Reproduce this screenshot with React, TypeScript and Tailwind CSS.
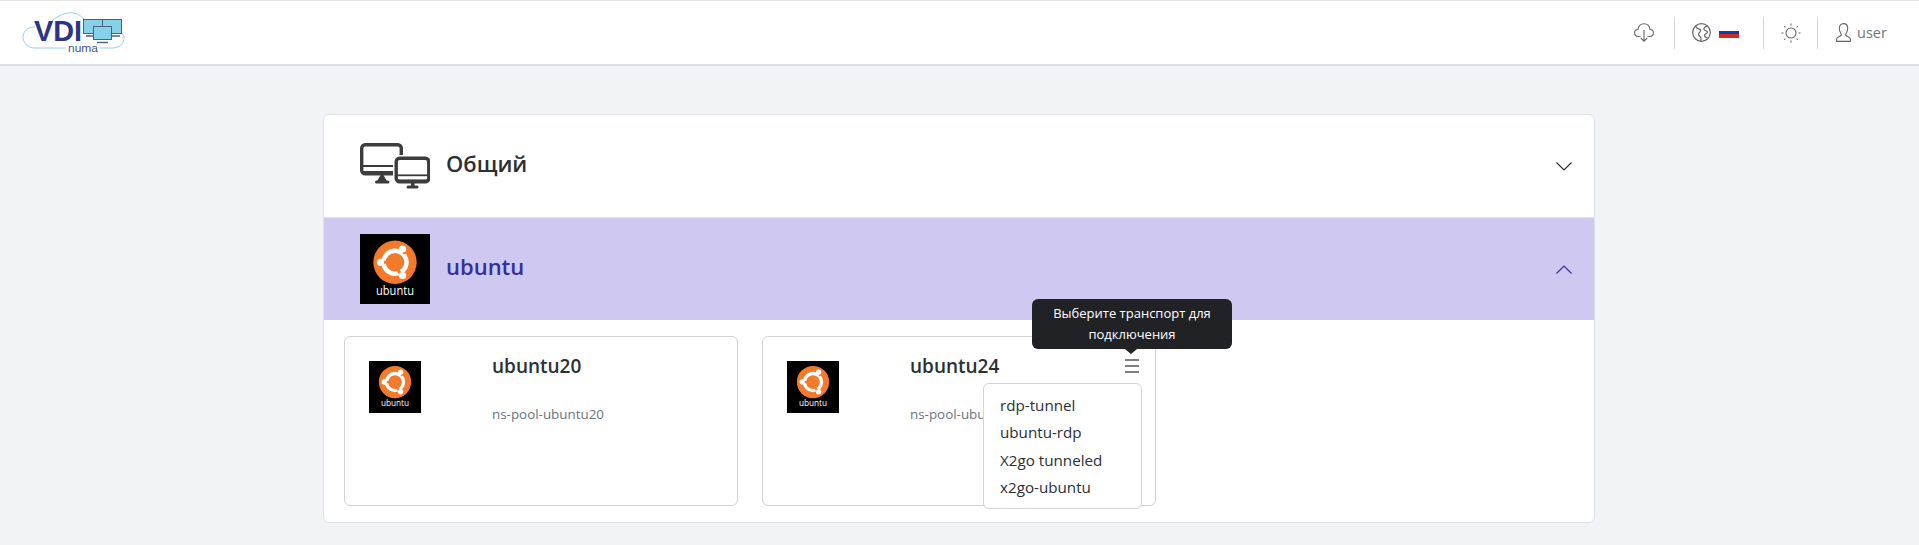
import React from "react";

function Logo() {
  return (
    <svg width="110" height="46" viewBox="20 10 110 46" className="block">
      <path d="M66 48 H35 C27 48 23 42 23 37 C23 31 28 27 35 27" fill="none" stroke="#8fd3ee" strokeWidth="1" />
      <path d="M52 21 C58 15 67 12 74 13 C78 14 81 16 84 19" fill="none" stroke="#8fd3ee" strokeWidth="1" />
      <path d="M100 48 H112 C120 48 124 43 124 38 C124 36 123 34 122 33" fill="none" stroke="#8fd3ee" strokeWidth="1" />
      <text x="34" y="41" fontFamily="'Liberation Sans', sans-serif" fontSize="29" fontWeight="700" fill="#2b3585" textLength="48" lengthAdjust="spacingAndGlyphs">VDI</text>
      <text x="68" y="52" fontFamily="'Liberation Sans', sans-serif" fontSize="10" fill="#4a5488" textLength="30" lengthAdjust="spacingAndGlyphs">numa</text>
      <rect x="83.5" y="19.5" width="19" height="14" fill="#86d0ea" stroke="#4f5f80" strokeWidth="1" />
      <rect x="102.5" y="19.5" width="19" height="14" fill="#86d0ea" stroke="#4f5f80" strokeWidth="1" />
      <path d="M86 36 H97 M109 36 H120" stroke="#4f5f80" strokeWidth="1.4" />
      <rect x="93" y="26" width="19" height="15" fill="#fff" />
      <rect x="93.5" y="26.5" width="18" height="13" fill="#86d0ea" stroke="#4f5f80" strokeWidth="1" />
      <path d="M97 42.5 H108" stroke="#4f5f80" strokeWidth="1.4" />
    </svg>
  );
}

function UbuntuLogo({ size }: { size: number }) {
  return (
    <svg width={size} height={size} viewBox="0 0 70 70" className="block shrink-0">
      <rect width="70" height="70" fill="#000" />
      <circle cx="35" cy="28.3" r="21.7" fill="#f47a2b" />
      <circle cx="35" cy="28.3" r="11.5" fill="none" stroke="#fff" strokeWidth="4.5" />
      <path d="M41 13 L45 20 M21 28.3 L30 28.3 M43 44 L38 36" stroke="#f47a2b" strokeWidth="3" />
      <circle cx="42.6" cy="15" r="3.6" fill="#fff" />
      <circle cx="20.5" cy="28.3" r="3.6" fill="#fff" />
      <circle cx="42.6" cy="41.5" r="3.6" fill="#fff" />
      <text x="35" y="60.5" textAnchor="middle" fontFamily="'Open Sans', sans-serif" fontSize="12.5" fill="#fff" textLength="38" lengthAdjust="spacingAndGlyphs">ubuntu</text>
    </svg>
  );
}

function MonitorsIcon() {
  return (
    <svg width="70" height="46" viewBox="0 0 70 46" fill="none" className="block">
      <rect x="1.7" y="1.7" width="39.6" height="29" rx="3.5" stroke="#3c3c3c" strokeWidth="3.4" />
      <path d="M2 23 H41 M2 29 H41" stroke="#3c3c3c" strokeWidth="2" />
      <path d="M22 31 L18 38 H26 Z" fill="#3c3c3c" stroke="#3c3c3c" strokeWidth="1.5" />
      <rect x="15" y="37.5" width="14.5" height="3" rx="1.5" fill="#3c3c3c" />
      <rect x="33" y="12" width="37" height="30" fill="#fff" />
      <rect x="36.2" y="15.2" width="32.6" height="23.6" rx="3.5" fill="#fff" stroke="#3c3c3c" strokeWidth="3.4" />
      <path d="M37 32.3 H68" stroke="#3c3c3c" strokeWidth="1.8" />
      <path d="M37 37.5 H68" stroke="#3c3c3c" strokeWidth="2.2" />
      <rect x="51" y="39" width="3.5" height="4" fill="#3c3c3c" />
      <rect x="46.5" y="42.5" width="12" height="3" rx="1.5" fill="#3c3c3c" />
    </svg>
  );
}

function Chevron({ up, color }: { up?: boolean; color: string }) {
  return (
    <svg width="16" height="9" viewBox="0 0 16 9" fill="none" stroke={color} strokeWidth="1.2" className="block">
      <path d={up ? "M0.5 8.5 L8 1 L15.5 8.5" : "M0.5 0.5 L8 8 L15.5 0.5"} />
    </svg>
  );
}

function CloudIcon() {
  return (
    <svg width="20" height="19" viewBox="0 0 20 19" fill="none" stroke="#666" strokeWidth="1.1" className="block">
      <path d="M6.5 13.5 H4.5 C2 13.5 .6 11.8 .6 10 C.6 8 2 6.6 4 6.5 C4.5 3 7 .7 10 .7 C13 .7 15.5 3 16 6.5 C18 6.6 19.4 8 19.4 10 C19.4 11.8 18 13.5 15.5 13.5 H13.5" />
      <path d="M10 7 V18 M6.8 15 L10 18.2 L13.2 15" />
    </svg>
  );
}

function GlobeIcon() {
  return (
    <svg width="19" height="19" viewBox="0 0 19 19" fill="none" stroke="#666" strokeWidth="1.2" className="block">
      <circle cx="9.5" cy="9.5" r="8.8" />
      <path d="M3.5 3 C4.5 6 7 5.5 8.5 7 C9.8 8.5 7 9 6.5 11 C6.2 13 8.5 13 9 15 C9.2 16.2 8.8 17.2 8.5 18" />
      <path d="M15.5 3.2 C13.5 3.5 11.5 4.5 12 6.3 C12.5 8 15 7.5 15.5 9 C15.5 10.5 12.5 10.5 12.5 12.5 C12.5 14 14 14.5 15.5 15" />
    </svg>
  );
}

function SunIcon() {
  return (
    <svg width="20" height="20" viewBox="0 0 20 20" fill="none" stroke="#666" strokeWidth="1.1" className="block">
      <circle cx="10" cy="10" r="5" />
      <path d="M10 .5 V2.5 M10 17.5 V19.5 M.5 10 H2.5 M17.5 10 H19.5 M3.2 3.2 L4.4 4.4 M15.6 15.6 L16.8 16.8 M16.8 3.2 L15.6 4.4 M4.4 15.6 L3.2 16.8" />
    </svg>
  );
}

function UserIcon() {
  return (
    <svg width="15" height="19" viewBox="0 0 15 19" fill="none" stroke="#666" strokeWidth="1.1" className="block">
      <path d="M.6 18.4 H14.4 V16 C14.4 14 11 13.5 10 12.5 C9.5 12 9.5 11.3 10 10.6 C11 9.3 11.7 7.7 11.7 5.5 C11.7 2.5 10 .6 7.5 .6 C5 .6 3.3 2.5 3.3 5.5 C3.3 7.7 4 9.3 5 10.6 C5.5 11.3 5.5 12 5 12.5 C4 13.5 .6 14 .6 16 Z" />
    </svg>
  );
}

function Divider() {
  return <div className="h-8 w-px bg-[#d4d4d4]" />;
}

function PoolCard({ title, sub, children }: { title: string; sub: string; children?: React.ReactNode }) {
  return (
    <div className="relative flex h-[170px] w-[394px] rounded-[6px] border border-[#d3d3d3] bg-white pt-[24px] pl-[24px]">
      <UbuntuLogo size={52} />
      <div className="ml-[71px]">
        <div className="-mt-[8px] text-[19px] leading-[27px] font-semibold text-[#2b3035]">{title}</div>
        <div className="mt-[24px] text-[13.4px] leading-[20px] text-[#6c757d]">{sub}</div>
      </div>
      {children}
    </div>
  );
}

export default function App() {
  return (
    <div className="h-[545px] overflow-hidden bg-[#f2f3f7] font-['Open_Sans',sans-serif]">
      <header className="flex h-[66px] items-center justify-between border-t border-b-2 border-t-[#e4e4e4] border-b-[#dbdfe5] bg-white pl-[20px] pr-[32px]">
        <Logo />
        <div className="flex items-center">
          <CloudIcon />
          <div className="ml-[20px] mr-[17px]"><Divider /></div>
          <GlobeIcon />
          <div className="ml-[8px] flex h-[11px] w-[20px] flex-col">
            <div className="flex-1 bg-white" />
            <div className="flex-1 bg-[#0a3fa8]" />
            <div className="flex-1 bg-[#d7281f]" />
          </div>
          <div className="ml-[24px] mr-[17px]"><Divider /></div>
          <SunIcon />
          <div className="ml-[16px] mr-[18px]"><Divider /></div>
          <UserIcon />
          <span className="ml-[6px] w-[30px] text-[14.5px] text-[#6c757d]">user</span>
        </div>
      </header>
      <main className="ml-[323px] mt-[48px] w-[1272px] rounded-[6px] border border-[#dee2e6] bg-white">
        <div className="flex h-[103px] items-center justify-between border-b border-[#e3e3e3] pl-[36px] pr-[22px]">
          <div className="flex items-center gap-[16px]">
            <MonitorsIcon />
            <span className="-mt-[6px] text-[22px] font-semibold text-[#2b3035]">Общий</span>
          </div>
          <Chevron color="#2b3035" />
        </div>
        <div className="flex h-[102px] items-center justify-between bg-[#cfc8f0] pl-[36px] pr-[22px]">
          <div className="flex items-center gap-[16px]">
            <UbuntuLogo size={70} />
            <span className="-mt-[5px] text-[22px] font-semibold text-[#34309b]">ubuntu</span>
          </div>
          <Chevron up color="#34309b" />
        </div>
        <div className="flex h-[202px] gap-[24px] pl-[20px] pt-[16px]">
          <PoolCard title="ubuntu20" sub="ns-pool-ubuntu20" />
          <PoolCard title="ubuntu24" sub="ns-pool-ubuntu24">
            <svg width="14" height="14" viewBox="0 0 14 14" className="absolute left-[362px] top-[22px]" stroke="#555" strokeWidth="1.4">
              <path d="M0 1 H14 M0 7 H14 M0 13 H14" />
            </svg>
            <div className="absolute left-[269px] top-[-38px] w-[200px] rounded-[6px] bg-[#212225] px-[16px] py-[4px] text-center text-[13px] leading-[21px] font-medium text-white">
              Выберите транспорт для подключения
              <div className="absolute bottom-[-5px] left-[93px] h-0 w-0 border-x-[6px] border-t-[5px] border-x-transparent border-t-[#212225]" />
            </div>
            <div className="absolute left-[220px] top-[46px] w-[159px] rounded-[6px] border border-[#d3d3d3] bg-white pt-[8px] pb-[7px] pl-[16px] text-[15.2px] leading-[27.3px] text-[#2b3035]">
              <div>rdp-tunnel</div>
              <div>ubuntu-rdp</div>
              <div>X2go tunneled</div>
              <div>x2go-ubuntu</div>
            </div>
          </PoolCard>
        </div>
      </main>
    </div>
  );
}
